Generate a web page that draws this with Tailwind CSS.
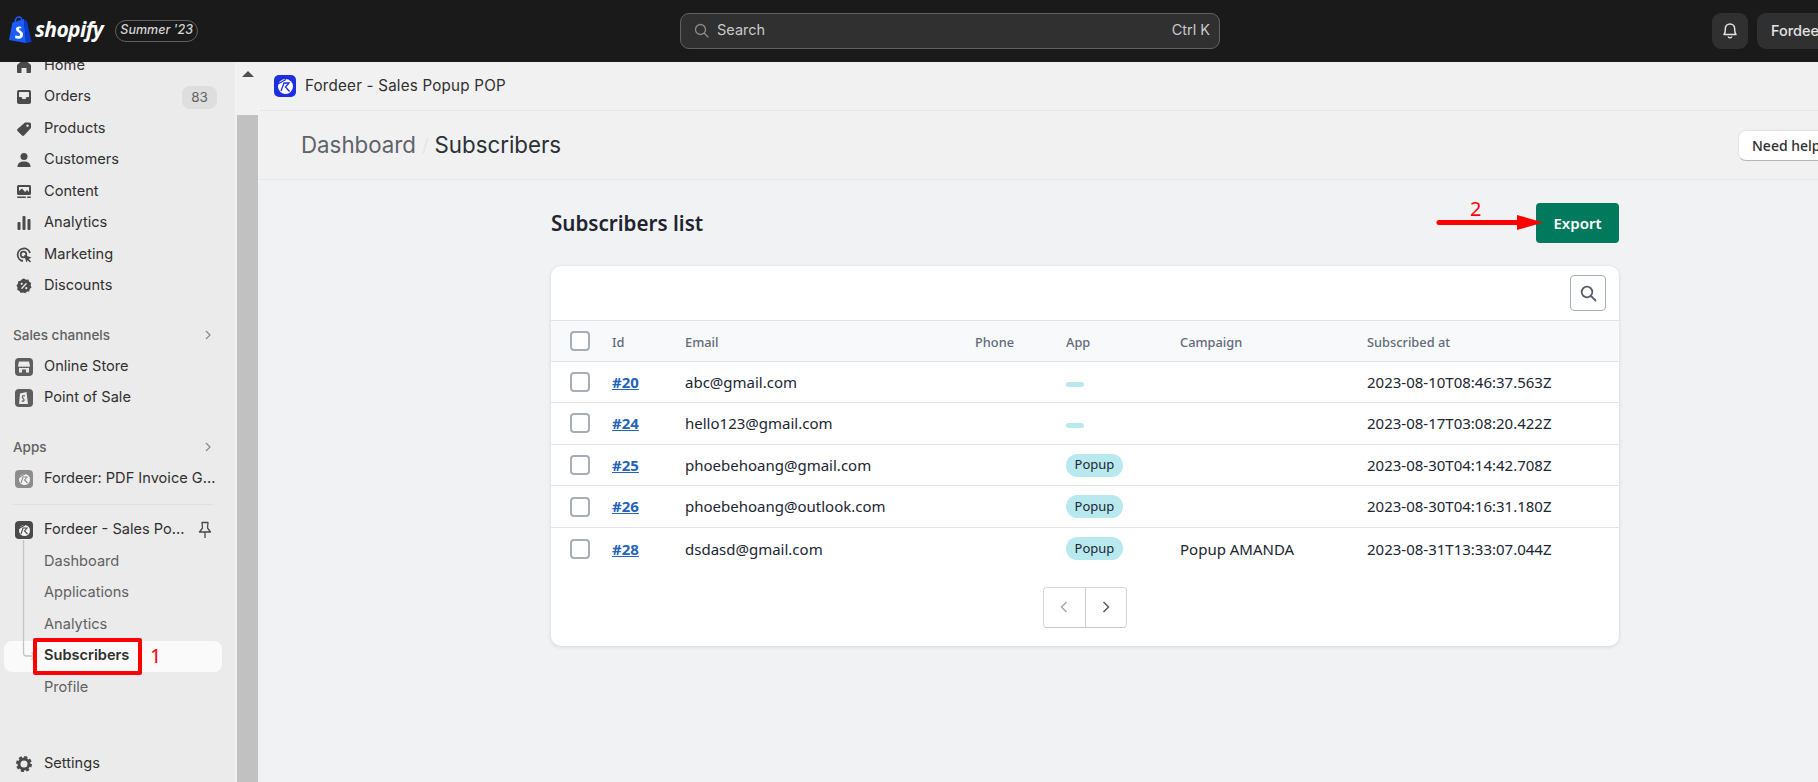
<!doctype html>
<html>
<head>
<meta charset="utf-8">
<script src="https://cdn.jsdelivr.net/npm/@tailwindcss/browser@4"></script>
</head>
<body class="w-[1818px] h-[782px] overflow-hidden bg-[#f1f2f4] font-['Inter',sans-serif] relative">

<header class="h-[62px] bg-[#1a1a1a] flex items-center relative">
  <div class="w-[680px] shrink-0 flex items-center pl-[8px]">
    <svg class="w-[24px] h-[28px] shrink-0 mb-[2px]" viewBox="0 0 24 28">
      <path d="M1 24 L4.500 6.500 L16 3 L18 27 L1 24Z" fill="#1a5cff"/>
      <path d="M16 3.500 L19 5.500 L23.500 26 L18 27Z" fill="#0b3ccf"/>
      <path d="M7 7 C7 3 9 1 11 1 C13 1 14 3 14 6" fill="none" stroke="#1a5cff" stroke-width="1.400"/>
      <path d="M13.500 11 C11 9.800 8 10.500 8 13 C8 16 12 16 12 18.500 C12 20.500 9.500 20.500 7.500 19.300 L7 22 C10 23.500 15 23 15 18.500 C15 15 11 14.800 11 13 C11 12 12.500 12 13 12.500Z" fill="#fff"/>
    </svg>
    <span class="ml-[3px] text-white text-[21px] font-['Open_Sans',sans-serif] font-bold italic tracking-[-0.6px] leading-none mb-[3px]">shopify</span>
    <span class="ml-[12px] w-[83px] h-[22px] rounded-[11px] border border-[#5f5f5f] text-[#d4d4d4] italic text-[12.500px] flex items-center justify-center font-medium mb-[1px]">Summer '23</span>
  </div>
  <div class="w-[540px] h-[36px] shrink-0 rounded-[9px] border border-[#616161] bg-[#303030] flex items-center pl-[13px] pr-[9px] pb-[2px] text-[14.500px] text-[#c9c9c9]">
    <svg class="w-[15px] h-[15px] mr-[8px]" viewBox="0 0 15 15" fill="none" stroke="#8a8a8a" stroke-width="1.300"><circle cx="6.500" cy="6.500" r="5"/><path d="M10.300 10.300 L14 14" stroke-linecap="round"/></svg>
    <span>Search</span>
    <span class="ml-auto">Ctrl K</span>
  </div>
  <div class="ml-[492px] w-[36px] h-[36px] shrink-0 rounded-[9px] bg-[#303030] flex items-center justify-center">
    <svg class="w-[18px] h-[18px]" viewBox="0 0 18 18" fill="none" stroke="#e3e3e3" stroke-width="1.500" stroke-linejoin="round"><path d="M3 12.500 C4.500 11 4.300 9 4.300 7 C4.300 4 6.400 2 9 2 C11.600 2 13.700 4 13.700 7 C13.700 9 13.500 11 15 12.500Z"/><path d="M7.200 14.500 C7.500 16.300 10.500 16.300 10.800 14.500"/></svg>
  </div>
  <div class="ml-[9px] w-[90px] h-[36px] shrink-0 rounded-[9px] bg-[#303030] pl-[14px] flex items-center text-[#e3e3e3] text-[14.500px] font-medium">Fordeer</div>
</header>

<div class="flex h-[720px]">
  <aside class="w-[235px] shrink-0 bg-[#ebebeb] overflow-hidden relative text-[14.600px] text-[#303030]">
    <nav class="-mt-[11.500px] flex flex-col">
      <div class="h-[31.500px] pl-[16px] flex items-center shrink-0"><svg class="w-[16px] h-[16px] mr-[12px]" viewBox="0 0 16 16" fill="#4a4a4a"><path d="M1 7 L8 1 L15 7 V14 A1 1 0 0 1 14 15 H10.500 V10 H5.500 V15 H2 A1 1 0 0 1 1 14Z"/></svg>Home</div>
      <div class="h-[31.500px] pl-[16px] pr-[18px] flex items-center shrink-0 -mt-[0.500px]"><svg class="w-[16px] h-[16px] mr-[12px]" viewBox="0 0 16 16" fill="#4a4a4a"><path fill-rule="evenodd" d="M1 3 A2 2 0 0 1 3 1 H13 A2 2 0 0 1 15 3 V13 A2 2 0 0 1 13 15 H3 A2 2 0 0 1 1 13Z M3 8 V3.500 A.5 .5 0 0 1 3.500 3 H12.500 A.5 .5 0 0 1 13 3.500 V8 H10.500 L9.500 10 H6.500 L5.500 8Z"/></svg>Orders<span class="ml-auto w-[35px] h-[23px] rounded-[8px] bg-[#dedede] text-[#616161] text-[13.500px] flex items-center justify-center">83</span></div>
      <div class="h-[31.500px] pl-[16px] flex items-center shrink-0"><svg class="w-[16px] h-[16px] mr-[12px]" viewBox="0 0 16 16" fill="#4a4a4a"><path fill-rule="evenodd" d="M9 1.500 H13.500 A1.500 1.500 0 0 1 15 3 V7 L8 14.500 A1.500 1.500 0 0 1 6 14.500 L1.500 10 A1.500 1.500 0 0 1 1.500 8Z M11.500 3.500 A1.200 1.200 0 1 0 11.510 3.500Z"/></svg>Products</div>
      <div class="h-[31.500px] pl-[16px] flex items-center shrink-0"><svg class="w-[16px] h-[16px] mr-[12px]" viewBox="0 0 16 16" fill="#4a4a4a"><circle cx="8" cy="4.500" r="3.500"/><path d="M1.500 15 C1.500 11 4 9.500 8 9.500 C12 9.500 14.500 11 14.500 15Z"/></svg>Customers</div>
      <div class="h-[31.500px] pl-[16px] flex items-center shrink-0"><svg class="w-[16px] h-[16px] mr-[12px]" viewBox="0 0 16 16" fill="#4a4a4a"><path fill-rule="evenodd" d="M2.500 1 H13.500 A1.500 1.500 0 0 1 15 2.500 V9.500 A1.500 1.500 0 0 1 13.500 11 H2.500 A1.500 1.500 0 0 1 1 9.500 V2.500 A1.500 1.500 0 0 1 2.500 1Z M3 3 V7 L6 4.500 L9 8 L11 6 L13 8 V3Z"/><rect x="1" y="12.500" width="9" height="1.500" rx=".7"/><rect x="11" y="12.500" width="4" height="1.500" rx=".7"/></svg>Content</div>
      <div class="h-[31.500px] pl-[16px] flex items-center shrink-0"><svg class="w-[16px] h-[16px] mr-[12px]" viewBox="0 0 16 16" fill="#4a4a4a"><rect x="1.500" y="7" width="3" height="8" rx="1"/><rect x="6.500" y="1" width="3" height="14" rx="1"/><rect x="11.500" y="4" width="3" height="11" rx="1"/></svg>Analytics</div>
      <div class="h-[31.500px] pl-[16px] flex items-center shrink-0"><svg class="w-[16px] h-[16px] mr-[12px]" viewBox="0 0 16 16"><path d="M14 6 A6.300 6.300 0 1 0 7 14" fill="none" stroke="#4a4a4a" stroke-width="1.800"/><circle cx="7.500" cy="7.500" r="2.800" fill="none" stroke="#4a4a4a" stroke-width="1.700"/><path d="M8 8 L15.500 10.500 L12.800 12 L15 14.500 L14 15.500 L11.700 13.200 L10.500 15.500Z" fill="#4a4a4a"/></svg>Marketing</div>
      <div class="h-[31.500px] pl-[16px] flex items-center shrink-0"><svg class="w-[16px] h-[16px] mr-[12px]" viewBox="0 0 16 16"><path d="M8 .5 L10 1.800 L12.400 1.500 L13.200 3.700 L15.200 5 L14.600 7.300 L15.500 9.500 L13.700 11 L13.300 13.400 L10.900 13.600 L9.200 15.300 L7 14.500 L4.700 15 L3.500 13 L1.300 12 L1.500 9.600 L.5 7.500 L2 5.600 L2.200 3.200 L4.600 2.800 L6.200 1Z" fill="#4a4a4a"/><circle cx="5.700" cy="5.800" r="1.100" fill="#ebebeb"/><circle cx="10.300" cy="10.200" r="1.100" fill="#ebebeb"/><path d="M10.500 5.200 L5.500 10.800" stroke="#ebebeb" stroke-width="1.300"/></svg>Discounts</div>

      <div class="mt-[17px] h-[31.500px] pl-[13px] pr-[23px] flex items-center justify-between text-[13.500px] font-medium text-[#616161] shrink-0">Sales channels<svg class="w-[8px] h-[10px]" viewBox="0 0 8 10" fill="none" stroke="#8a8a8a" stroke-width="1.200"><path d="M2 1 L6 5 L2 9"/></svg></div>
      <div class="h-[31.500px] pl-[15px] flex items-center shrink-0 mt-[0.500px]"><svg class="w-[18px] h-[18px] mr-[11px]" viewBox="0 0 18 18"><rect width="18" height="18" rx="4" fill="#5e5e5e"/><path d="M4 3.500 H14 L15 8 C14 9.300 13 9.300 12 8.300 C11 9.300 10 9.300 9 8.300 C8 9.300 7 9.300 6 8.300 C5 9.300 4 9.300 3 8Z M4 10 H14 V14.500 H11 V11.500 H7 V14.500 H4Z" fill="#ebebeb"/></svg>Online Store</div>
      <div class="h-[31.500px] pl-[15px] flex items-center shrink-0"><svg class="w-[18px] h-[18px] mr-[11px]" viewBox="0 0 18 18"><rect width="18" height="18" rx="4" fill="#5e5e5e"/><path d="M4 15 L5 4.500 L11.500 3 L13 15Z" fill="#ebebeb"/><path d="M10 7 C8.500 6 7 7 7.500 8.500 C8 10 9.500 10 9 11.500 C8.700 12.500 7.500 12.300 6.800 11.800" fill="none" stroke="#5e5e5e" stroke-width="1.200"/></svg>Point of Sale</div>

      <div class="mt-[17px] h-[31.500px] pl-[13px] pr-[23px] flex items-center justify-between text-[13.500px] font-medium text-[#616161] shrink-0">Apps<svg class="w-[8px] h-[10px]" viewBox="0 0 8 10" fill="none" stroke="#8a8a8a" stroke-width="1.200"><path d="M2 1 L6 5 L2 9"/></svg></div>
      <div class="mt-[1px] h-[31.500px] pl-[15px] flex items-center shrink-0 whitespace-nowrap"><svg class="w-[18px] h-[18px] mr-[11px] shrink-0" viewBox="0 0 18 18"><rect width="18" height="18" rx="4" fill="#8c8c8c"/><circle cx="9.500" cy="9.500" r="5.500" fill="#f3f3f3"/><path d="M3 8 L10 4 M6 13 L8 7 L12 7 L9.500 10 L12.500 13" fill="none" stroke="#8c8c8c" stroke-width="1.100"/></svg>Fordeer: PDF Invoice G...</div>
      <div class="mt-[9px] mx-[13px] w-[200px] h-px bg-[#e0e0e0] shrink-0"></div>
      <div class="mt-[9px] h-[31.500px] pl-[15px] flex items-center shrink-0 whitespace-nowrap"><svg class="w-[18px] h-[18px] mr-[11px] shrink-0" viewBox="0 0 18 18"><rect width="18" height="18" rx="4" fill="#4a4a4a"/><circle cx="9.500" cy="9.500" r="5.500" fill="#f3f3f3"/><path d="M3 8 L10 4 M6 13 L8 7 L12 7 L9.500 10 L12.500 13" fill="none" stroke="#4a4a4a" stroke-width="1.100"/></svg>Fordeer - Sales Po...<svg class="ml-[14px] w-[14px] h-[18px]" viewBox="0 0 14 18" fill="none" stroke="#4a4a4a" stroke-width="1.300" stroke-linejoin="round"><path d="M4 1.500 H10 L9.500 7 L12.500 11 H1.500 L4.500 7Z M7 11 V17"/></svg></div>
      <div class="h-[31.500px] pl-[44px] flex items-center shrink-0 text-[#616161] mt-[0.500px]">Dashboard</div>
      <div class="h-[31.500px] pl-[44px] flex items-center shrink-0 text-[#616161]">Applications</div>
      <div class="h-[31.500px] pl-[44px] flex items-center shrink-0 text-[#616161]">Analytics</div>
      <div class="h-[31.500px] ml-[4px] w-[218px] rounded-[8px] bg-[#fafafa] pl-[40px] flex items-center shrink-0 font-semibold">Subscribers</div>
      <div class="h-[31.500px] pl-[44px] flex items-center shrink-0 text-[#616161]">Profile</div>
    </nav>
    <div class="absolute left-[16px] top-[691px] flex items-center"><svg class="w-[16px] h-[16px] mr-[12px]" viewBox="0 0 16 16"><circle cx="8" cy="8" r="5" fill="none" stroke="#4a4a4a" stroke-width="3"/><circle cx="8" cy="8" r="6.600" fill="none" stroke="#4a4a4a" stroke-width="2.800" stroke-dasharray="3 2.180"/></svg>Settings</div>
    <svg class="absolute left-[20px] top-[478px] w-[18px] h-[120px]" viewBox="0 0 18 120" fill="none" stroke="#c4c4c4" stroke-width="1.300"><path d="M3.500 0 V113 A3 3 0 0 0 6.500 116 H15 M11.500 112.500 L15 116 L11.500 119.500"/></svg>
  </aside>

  <div class="w-[23px] shrink-0 bg-[#f1f1f1] flex flex-col pl-[2px]">
    <div class="h-[53px] shrink-0 flex justify-center pt-[9px]"><div class="w-0 h-0 border-l-[6px] border-r-[6px] border-b-[6px] border-l-transparent border-r-transparent border-b-[#505050]"></div></div>
    <div class="flex-1 bg-[#c1c1c1]"></div>
  </div>

  <main class="w-[1560px] shrink-0 flex flex-col">
    <div class="h-[49px] bg-[#f1f1f1] border-b border-[#e6e6e6] ml-[2px] pl-[14px] flex items-center shrink-0">
      <svg class="w-[22px] h-[22px] mr-[9px]" viewBox="0 0 22 22"><rect width="22" height="22" rx="5" fill="#1c2ee0"/><circle cx="11.500" cy="11.500" r="7.500" fill="#fff"/><path d="M3 9.500 L12 4.500 M7 16 L10 8 L15 8 L11.500 12 L15.500 16.500" fill="none" stroke="#1c2ee0" stroke-width="1.300"/></svg>
      <span class="text-[15.200px] text-[#303030] tracking-[0.2px]">Fordeer - Sales Popup POP</span>
    </div>
    <div class="h-[69px] bg-[#f1f1f1] border-b border-[#e8e8e8] ml-[2px] pl-[41px] -mr-[30px] flex items-center shrink-0">
      <span class="text-[22.300px] text-[#5f6368]">Dashboard</span>
      <span class="text-[#e6e6e6] text-[18px] mx-[6px]">/</span>
      <span class="text-[22.300px] text-[#2b2f36]">Subscribers</span>
      <div class="ml-auto w-[110px] h-[31px] rounded-[8px] bg-white border border-[#e3e3e3] border-b-[#b5b5b5] flex items-center pl-[13px] text-[14px] font-medium text-[#303030] whitespace-nowrap font-['Noto_Sans',sans-serif]">Need help?</div>
    </div>

    <section class="ml-[293px] w-[1068px] font-['Noto_Sans',sans-serif]">
      <div class="mt-[23px] h-[40px] flex items-center justify-between">
        <h1 class="text-[20.600px] font-semibold text-[#1f2430]">Subscribers list</h1>
        <div class="w-[83px] h-[40px] rounded-[4px] bg-[#00795c] text-white text-[15px] font-semibold flex items-center justify-center">Export</div>
      </div>

      <div class="mt-[23px] h-[380px] bg-white rounded-[10px] shadow-[0_1px_4px_rgba(0,0,0,0.12)] overflow-hidden text-[15px] text-[#202532]">
        <div class="h-[54px] flex justify-end items-start pt-[9px] pr-[13px]">
          <div class="w-[36px] h-[36px] rounded-[4px] border border-[#a8aeb8] flex items-center justify-center">
            <svg class="w-[17px] h-[17px]" viewBox="0 0 17 17" fill="none" stroke="#59606c" stroke-width="1.800"><circle cx="7" cy="7" r="5.300"/><path d="M11 11 L15.500 15.500" stroke-linecap="round"/></svg>
          </div>
        </div>
        <div class="h-[41.600px] grid grid-cols-[61px_73px_290px_91px_114px_187px_1fr] items-center bg-[#f8f9fb] border-y border-[#e1e3e8] text-[12.800px] font-medium text-[#626a78]">
          <div class="pl-[19px]"><div class="w-[20px] h-[20px] rounded-[4px] border-2 border-[#a8aeb8] bg-white"></div></div>
          <div class="pt-[3px]">Id</div><div class="pt-[3px]">Email</div><div class="pt-[3px]">Phone</div><div class="pt-[3px]">App</div><div class="pt-[3px]">Campaign</div><div class="pt-[3px]">Subscribed at</div>
        </div>
        <div class="h-[41.600px] grid grid-cols-[61px_73px_290px_91px_114px_187px_1fr] items-center border-b border-[#e1e3e8]">
          <div class="pl-[19px]"><div class="w-[20px] h-[20px] rounded-[4px] border-2 border-[#a8aeb8] bg-white"></div></div>
          <div class="font-bold text-[#2463b8] underline">#20</div><div>abc@gmail.com</div><div></div>
          <div><div class="w-[18px] h-[5px] rounded-full bg-[#b8e9ef] mt-[5px]"></div></div><div></div><div>2023-08-10T08:46:37.563Z</div>
        </div>
        <div class="h-[41.600px] grid grid-cols-[61px_73px_290px_91px_114px_187px_1fr] items-center border-b border-[#e1e3e8]">
          <div class="pl-[19px]"><div class="w-[20px] h-[20px] rounded-[4px] border-2 border-[#a8aeb8] bg-white"></div></div>
          <div class="font-bold text-[#2463b8] underline">#24</div><div>hello123@gmail.com</div><div></div>
          <div><div class="w-[18px] h-[5px] rounded-full bg-[#b8e9ef] mt-[5px]"></div></div><div></div><div>2023-08-17T03:08:20.422Z</div>
        </div>
        <div class="h-[41.600px] grid grid-cols-[61px_73px_290px_91px_114px_187px_1fr] items-center border-b border-[#e1e3e8]">
          <div class="pl-[19px]"><div class="w-[20px] h-[20px] rounded-[4px] border-2 border-[#a8aeb8] bg-white"></div></div>
          <div class="font-bold text-[#2463b8] underline">#25</div><div>phoebehoang@gmail.com</div><div></div>
          <div><div class="w-[57px] h-[23px] rounded-full bg-[#b8e9ef] text-[13px] flex items-center justify-center">Popup</div></div><div></div><div>2023-08-30T04:14:42.708Z</div>
        </div>
        <div class="h-[41.600px] grid grid-cols-[61px_73px_290px_91px_114px_187px_1fr] items-center border-b border-[#e1e3e8]">
          <div class="pl-[19px]"><div class="w-[20px] h-[20px] rounded-[4px] border-2 border-[#a8aeb8] bg-white"></div></div>
          <div class="font-bold text-[#2463b8] underline">#26</div><div>phoebehoang@outlook.com</div><div></div>
          <div><div class="w-[57px] h-[23px] rounded-full bg-[#b8e9ef] text-[13px] flex items-center justify-center">Popup</div></div><div></div><div>2023-08-30T04:16:31.180Z</div>
        </div>
        <div class="h-[41.600px] grid grid-cols-[61px_73px_290px_91px_114px_187px_1fr] items-center">
          <div class="pl-[19px]"><div class="w-[20px] h-[20px] rounded-[4px] border-2 border-[#a8aeb8] bg-white"></div></div>
          <div class="font-bold text-[#2463b8] underline">#28</div><div>dsdasd@gmail.com</div><div></div>
          <div><div class="w-[57px] h-[23px] rounded-full bg-[#b8e9ef] text-[13px] flex items-center justify-center">Popup</div></div><div>Popup AMANDA</div><div>2023-08-31T13:33:07.044Z</div>
        </div>
        <div class="mt-[17px] flex justify-center">
          <div class="w-[84px] h-[41px] rounded-[4px] border border-[#d5d8de] border-b-[#c4c7ce] flex">
            <div class="flex-1 flex items-center justify-center border-r border-[#c9ccd3]"><svg class="w-[8px] h-[12px]" viewBox="0 0 8 12" fill="none" stroke="#a8aeb8" stroke-width="1.600"><path d="M6.500 1 L1.500 6 L6.500 11"/></svg></div>
            <div class="flex-1 flex items-center justify-center"><svg class="w-[8px] h-[12px]" viewBox="0 0 8 12" fill="none" stroke="#59606c" stroke-width="1.600"><path d="M1.500 1 L6.500 6 L1.500 11"/></svg></div>
          </div>
        </div>
      </div>
    </section>
  </main>
</div>

<!-- annotations -->
<div class="absolute left-[33px] top-[638px] w-[109px] h-[37px] border-[4px] border-[#fe0000] rounded-[2px]"></div>
<div class="absolute left-[150px] top-[641px] text-[#fe0000] text-[20px] leading-[30px] font-['Noto_Sans',sans-serif]">1</div>
<div class="absolute left-[1470px] top-[194px] text-[#fe0000] text-[20px] leading-[30px] font-['Noto_Sans',sans-serif]">2</div>
<svg class="absolute left-[1436px] top-[212px] w-[110px] h-[22px]" viewBox="0 0 110 22"><path d="M3 10.500 H82" stroke="#fe0000" stroke-width="5" stroke-linecap="round"/><path d="M81 3 L107 10.500 L81 18Z" fill="#fe0000"/></svg>
</body>
</html>
